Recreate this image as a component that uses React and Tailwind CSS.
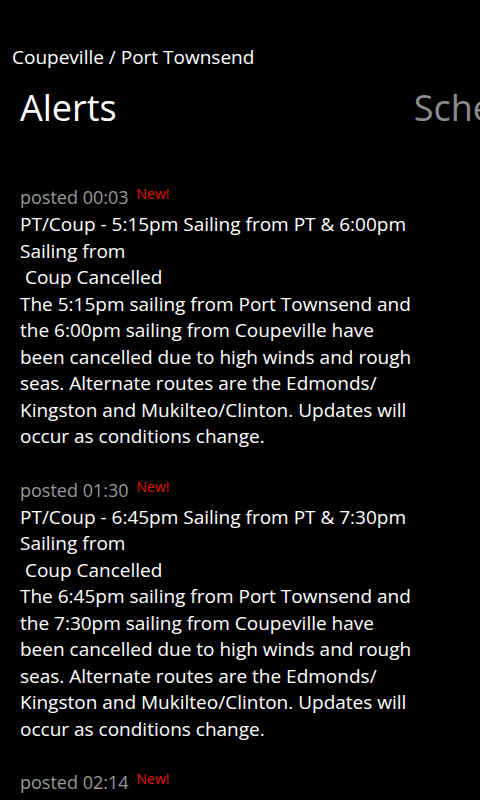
const alerts = [
  {
    posted: "00:03",
    lines: [
      "PT/Coup - 5:15pm Sailing from PT & 6:00pm",
      "Sailing from",
      "\u00a0Coup Cancelled",
      "The 5:15pm sailing from Port Townsend and",
      "the 6:00pm sailing from Coupeville have",
      "been cancelled due to high winds and rough",
      "seas. Alternate routes are the Edmonds/",
      "Kingston and Mukilteo/Clinton. Updates will",
      "occur as conditions change.",
    ],
  },
  {
    posted: "01:30",
    lines: [
      "PT/Coup - 6:45pm Sailing from PT & 7:30pm",
      "Sailing from",
      "\u00a0Coup Cancelled",
      "The 6:45pm sailing from Port Townsend and",
      "the 7:30pm sailing from Coupeville have",
      "been cancelled due to high winds and rough",
      "seas. Alternate routes are the Edmonds/",
      "Kingston and Mukilteo/Clinton. Updates will",
      "occur as conditions change.",
    ],
  },
  { posted: "02:14", lines: [] },
];

function AlertItem({ posted, lines }) {
  return (
    <div className="mb-[27px]">
      <div className="flex items-start h-[27px]">
        <span className="text-[18px] leading-[27px] text-[#999999]">posted {posted}</span>
        <span className="ml-[8px] text-[14px] leading-[20px] text-[#e51400]">New!</span>
      </div>
      <div className="text-[19px] leading-[26.5px] text-white">
        {lines.map((l, i) => (
          <div key={i} className="whitespace-pre">{l}</div>
        ))}
      </div>
    </div>
  );
}

export default function App() {
  return (
    <div
      className="w-[480px] h-[800px] overflow-hidden bg-black text-white"
      style={{ fontFamily: '"Segoe WP", "Open Sans", sans-serif' }}
    >
      <div className="pt-[44px] pl-[12px] text-[19px] leading-[26px]">Coupeville / Port Townsend</div>
      <div className="flex gap-[297px] pl-[20px] mt-[16px] whitespace-nowrap">
        <span className="shrink-0 text-[36px] leading-[44px]">Alerts</span>
        <span className="shrink-0 text-[36px] leading-[44px] text-[#8c8c8c]">Sche</span>
      </div>
      <div className="pl-[20px] pt-[54px]">
        {alerts.map((a) => (
          <AlertItem key={a.posted} {...a} />
        ))}
      </div>
    </div>
  );
}
